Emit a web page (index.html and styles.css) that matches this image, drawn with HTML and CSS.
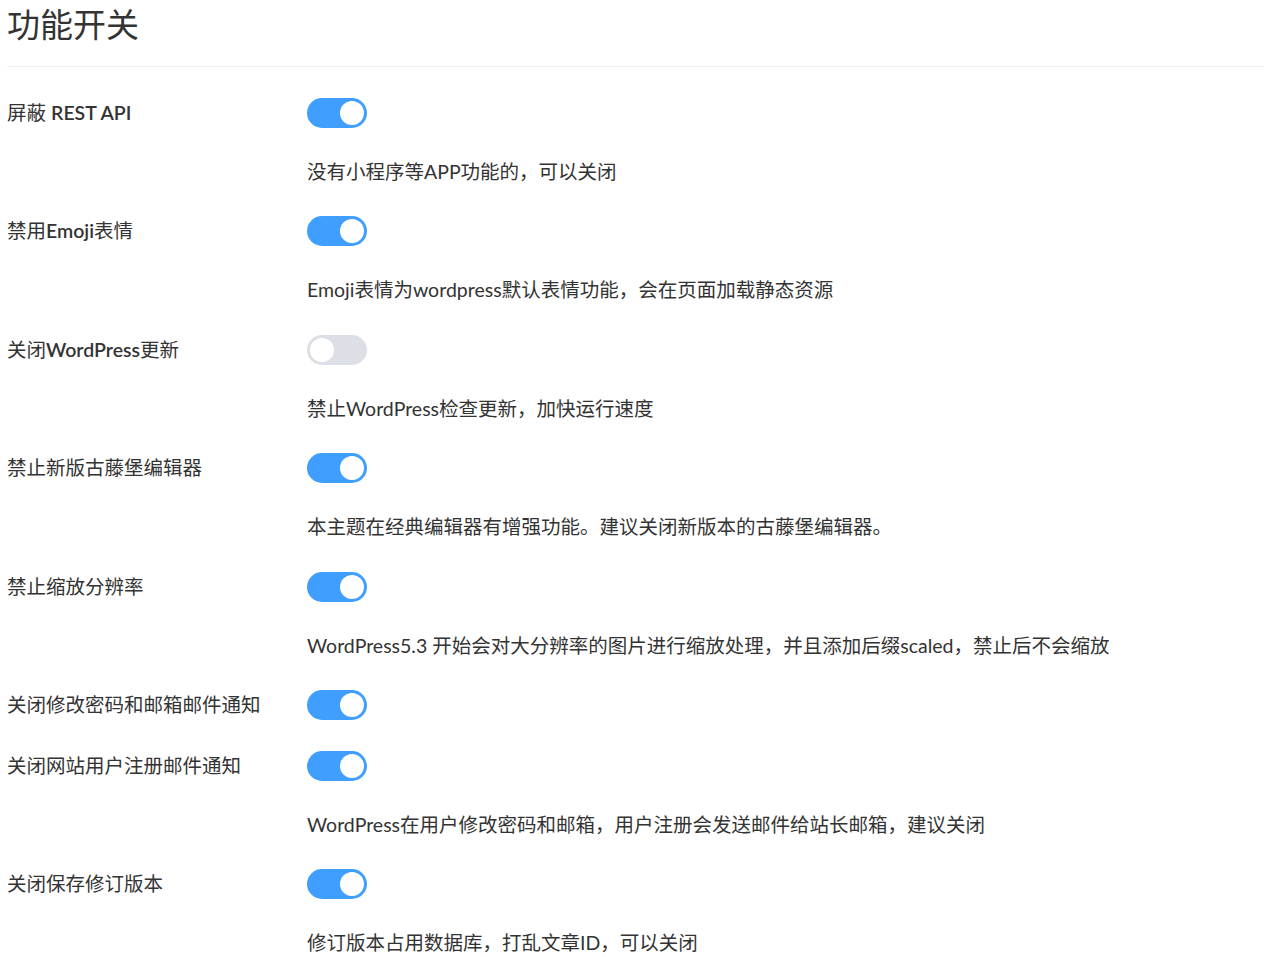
FILE: index.html
```html
<!DOCTYPE html>
<html lang="zh-CN">
<head>
    <meta charset="UTF-8">
    <meta name="viewport" content="width=device-width, initial-scale=1.0">
    <title>功能开关</title>
    <link rel="stylesheet" href="styles.css">
</head>
<body>
    <div class="page">
        <h2 class="page-title">功能开关</h2>

        <div class="form-item">
            <div class="item-label">屏蔽 <b>REST API</b></div>
            <div class="item-content">
                <label class="switch"><input type="checkbox" checked><span class="slider"></span></label>
                <p class="item-desc">没有小程序等APP功能的，可以关闭</p>
            </div>
        </div>

        <div class="form-item">
            <div class="item-label">禁用<b>Emoji</b>表情</div>
            <div class="item-content">
                <label class="switch"><input type="checkbox" checked><span class="slider"></span></label>
                <p class="item-desc">Emoji表情为wordpress默认表情功能，会在页面加载静态资源</p>
            </div>
        </div>

        <div class="form-item">
            <div class="item-label">关闭<b>WordPress</b>更新</div>
            <div class="item-content">
                <label class="switch"><input type="checkbox"><span class="slider"></span></label>
                <p class="item-desc">禁止WordPress检查更新，加快运行速度</p>
            </div>
        </div>

        <div class="form-item">
            <div class="item-label">禁止新版古藤堡编辑器</div>
            <div class="item-content">
                <label class="switch"><input type="checkbox" checked><span class="slider"></span></label>
                <p class="item-desc">本主题在经典编辑器有增强功能。建议关闭新版本的古藤堡编辑器。</p>
            </div>
        </div>

        <div class="form-item">
            <div class="item-label">禁止缩放分辨率</div>
            <div class="item-content">
                <label class="switch"><input type="checkbox" checked><span class="slider"></span></label>
                <p class="item-desc">WordPress5.3 开始会对大分辨率的图片进行缩放处理，并且添加后缀scaled，禁止后不会缩放</p>
            </div>
        </div>

        <div class="form-item">
            <div class="item-label">关闭修改密码和邮箱邮件通知</div>
            <div class="item-content">
                <label class="switch"><input type="checkbox" checked><span class="slider"></span></label>
            </div>
        </div>

        <div class="form-item">
            <div class="item-label">关闭网站用户注册邮件通知</div>
            <div class="item-content">
                <label class="switch"><input type="checkbox" checked><span class="slider"></span></label>
                <p class="item-desc">WordPress在用户修改密码和邮箱，用户注册会发送邮件给站长邮箱，建议关闭</p>
            </div>
        </div>

        <div class="form-item">
            <div class="item-label">关闭保存修订版本</div>
            <div class="item-content">
                <label class="switch"><input type="checkbox" checked><span class="slider"></span></label>
                <p class="item-desc">修订版本占用数据库，打乱文章ID，可以关闭</p>
            </div>
        </div>
    </div>
</body>
</html>
```

FILE: styles.css
```css
body {
    margin: 0;
    padding: 0;
    font-family: Lato, "Noto Sans CJK SC", sans-serif;
    color: #333;
    background-color: white;
}
.page {
    padding: 0 1px 0 7px;
}
.page-title {
    margin: 0;
    font-size: 33px;
    font-weight: normal;
    line-height: 48px;
    padding-bottom: 18px;
    border-bottom: 1px solid #eeeeee;
    margin-bottom: 31px;
}
.form-item {
    display: flex;
    margin-bottom: 31px;
}
.item-label {
    width: 300px;
    flex-shrink: 0;
    font-size: 19.5px;
    line-height: 30px;
}
.item-label b {
    font-weight: 600;
}
.item-content {
    display: flex;
    flex-direction: column;
    align-items: flex-start;
}
.item-desc {
    margin: 30px 0 0;
    font-size: 19.5px;
    line-height: 27.4px;
}

.switch {
    position: relative;
    display: inline-block;
    width: 60px;
    height: 30px;
    cursor: pointer;
}
.switch input {
    display: none;
}
.slider {
    position: absolute;
    top: 0;
    left: 0;
    right: 0;
    bottom: 0;
    background-color: #dcdfe6;
    border-radius: 15px;
    transition: background-color 0.3s;
}
.slider::before {
    content: "";
    position: absolute;
    top: 3px;
    left: 3px;
    width: 24px;
    height: 24px;
    border-radius: 50%;
    background-color: white;
    transition: transform 0.3s;
}
.switch input:checked + .slider {
    background-color: #409eff;
}
.switch input:checked + .slider::before {
    transform: translateX(30px);
}
```
